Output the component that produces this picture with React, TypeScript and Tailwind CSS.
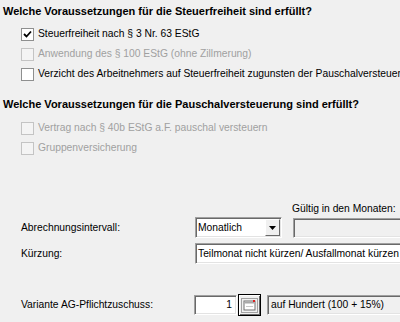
import React from "react";

const font = { fontFamily: '"Liberation Sans", Arial, sans-serif' };

function Check({ label, checked = false, disabled = false }: { label: string; checked?: boolean; disabled?: boolean }) {
  return (
    <div className="flex h-[20px] items-center whitespace-nowrap pl-[21px]">
      <span
        className={`flex h-[13px] w-[13px] shrink-0 items-center justify-center border ${
          disabled ? "border-[#c4c4c4] bg-[#f4f4f4]" : "border-[#8e8f8f] bg-white"
        }`}
      >
        {checked ? (
          <svg width="9" height="9" viewBox="0 0 9 9">
            <path d="M1 4 L3.5 6.5 L8 1.5" fill="none" stroke="#000" strokeWidth="1.8" />
          </svg>
        ) : null}
      </span>
      <span className={`ml-[4px] ${disabled ? "text-[#a0a0a0]" : "text-black"}`}>{label}</span>
    </div>
  );
}

const sunken =
  "border border-t-[#a0a0a0] border-l-[#a0a0a0] border-b-white border-r-white shadow-[inset_1px_1px_0_#696969,inset_-1px_-1px_0_#e3e3e3]";

function Heading({ children }: { children: React.ReactNode }) {
  return <div className="h-[20px] whitespace-nowrap pl-[3px] text-[11px] leading-[20px] font-bold text-black">{children}</div>;
}

export default function App() {
  return (
    <div className="h-[322px] w-[400px] overflow-hidden bg-[#f0f0f0] text-[10.3px] text-black" style={font}>
      <div className="pt-[1px]">
        <Heading>Welche Voraussetzungen für die Steuerfreiheit sind erfüllt?</Heading>
        <div className="pt-[3px]">
          <Check label="Steuerfreiheit nach § 3 Nr. 63 EStG" checked />
          <Check label="Anwendung des § 100 EStG (ohne Zillmerung)" disabled />
          <Check label="Verzicht des Arbeitnehmers auf Steuerfreiheit zugunsten der Pauschalversteuerung" />
        </div>
        <div className="pt-[10px]">
          <Heading>Welche Voraussetzungen für die Pauschalversteuerung sind erfüllt?</Heading>
        </div>
        <div className="pt-[4px]">
          <Check label="Vertrag nach § 40b EStG a.F. pauschal versteuern" disabled />
          <Check label="Gruppenversicherung" disabled />
        </div>

        <div className="mt-[43px] flex h-[16px] items-center whitespace-nowrap pl-[292px]">Gültig in den Monaten:</div>

        <div className="flex h-[21px] items-center whitespace-nowrap">
          <span className="w-[195px] shrink-0 pl-[21px]">Abrechnungsintervall:</span>
          <div className={`flex h-[21px] w-[87px] shrink-0 items-center bg-white ${sunken}`}>
            <span className="flex-1 pl-[2px]">Monatlich</span>
            <span className="mr-[1px] flex h-[17px] w-[15px] items-center justify-center border border-t-white border-l-white border-b-[#696969] border-r-[#696969] bg-[#f0f0f0]">
              <svg width="7" height="4" viewBox="0 0 7 4">
                <path d="M0 0 H7 L3.5 4 Z" fill="#000" />
              </svg>
            </span>
          </div>
          <div className={`ml-[11px] h-[20px] w-[200px] shrink-0 bg-[#f0f0f0] ${sunken}`} />
        </div>

        <div className="mt-[5px] flex h-[21px] items-center whitespace-nowrap">
          <span className="w-[195px] shrink-0 pl-[21px]">Kürzung:</span>
          <div className={`flex h-[21px] w-[260px] shrink-0 items-center bg-white pl-[2px] ${sunken}`}>
            Teilmonat nicht kürzen/ Ausfallmonat kürzen
          </div>
        </div>

        <div className="mt-[30px] flex h-[22px] items-center whitespace-nowrap">
          <span className="w-[194px] shrink-0 pl-[21px]">Variante AG-Pflichtzuschuss:</span>
          <div className={`flex h-[20px] w-[43px] shrink-0 items-center justify-end bg-white pr-[4px] ${sunken}`}>1</div>
          <button className="ml-[1px] flex h-[22px] w-[23px] shrink-0 items-center justify-center border border-black bg-[#f0f0f0] shadow-[inset_1px_1px_0_#fff,inset_-1px_-1px_0_#696969]">
            <svg width="17" height="15" viewBox="0 0 17 15">
              <rect x="0.5" y="0.5" width="16" height="14" fill="none" stroke="#555" strokeDasharray="1 1" />
              <rect x="3" y="3" width="11" height="9" fill="#fff" stroke="#707070" />
              <rect x="3.5" y="3.5" width="10" height="2" fill="#a8a8a8" />
              <rect x="12" y="2" width="2" height="2" fill="#e02020" />
              <rect x="5" y="8" width="7" height="1" fill="#c8c8c8" />
            </svg>
          </button>
          <div className={`ml-[6px] flex h-[20px] w-[200px] shrink-0 items-center bg-[#f0f0f0] pl-[3px] ${sunken}`}>
            auf Hundert (100 + 15%)
          </div>
        </div>
      </div>
    </div>
  );
}
